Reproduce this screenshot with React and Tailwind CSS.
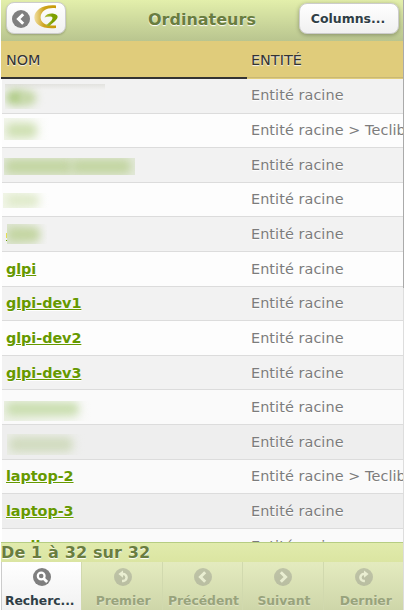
import React from "react";

const rows = [
  { blur: "bar-a" },
  { blur: "bar-b", entity: "Entité racine > Teclib" },
  { blur: "bar-c", low: true },
  { blur: "bar-d" },
  { blur: "bar-e", low: true },
  { name: "glpi", low: true },
  { name: "glpi-dev1" },
  { name: "glpi-dev2", low: true },
  { name: "glpi-dev3", low: true },
  { blur: "bar-f", low: true },
  { blur: "bar-g", low: true },
  { name: "laptop-2", entity: "Entité racine > Teclib" },
  { name: "laptop-3", low: true },
  { name: "mail", low: true },
];

// Tinted box, margins and smudges of every masked name.
const masks = {
  "bar-a": { box: "mt-[5px] ml-[3px] h-[25px] w-[100px] bg-linear-to-b from-[#e2e2df] via-[#f2f2f1] via-25% to-transparent", blobs: ["left-[1px] top-[6px] h-[15px] w-[19px] bg-[#b0cc87]", "left-[15px] top-[7px] h-[14px] w-[16px] bg-[#c2d6a2]"] },
  "bar-b": { box: "mt-[4px] ml-[2px] h-[22px] w-[46px] bg-linear-to-r from-[#f3f6ed] to-transparent", blobs: ["left-[2px] top-[5px] h-[15px] w-[31px] bg-[#cfe0b3]"] },
  "bar-c": { box: "mt-[10px] ml-[2px] h-[17px] w-[131px] bg-[#e3e9da]", blobs: ["left-[1px] top-[1px] h-[15px] w-[68px] bg-[#c3d5a2]", "left-[67px] top-[1px] h-[15px] w-[60px] bg-[#c3d5a2]"] },
  "bar-d": { box: "mt-[10px] ml-[1px] h-[15px] w-[46px] bg-linear-to-r from-[#f2f6e9] to-transparent", blobs: ["left-[3px] top-[1px] h-[13px] w-[33px] bg-[#dfeaca]"] },
  "bar-e": { box: "mt-[7px] ml-[5px] h-[20px] w-[40px] bg-linear-to-r from-[#dfe6d4] to-transparent", blobs: ["left-0 top-[3px] h-[15px] w-[33px] bg-[#c3d5a1]"], edge: true },
  "bar-f": { box: "mt-[11px] ml-[2px] h-[20px] w-[88px] bg-linear-to-r from-[#edf1e6] to-transparent", blobs: ["left-[2px] top-[1px] h-[14px] w-[73px] bg-[#cadeb0]"] },
  "bar-g": { box: "mt-[9px] ml-[5px] h-[21px] w-[80px] bg-linear-to-r from-[#ebede7] to-transparent", blobs: ["left-[2px] top-[3px] h-[15px] w-[64px] bg-[#d1dbbf]"] },
};

function Mask({ id }) {
  const m = masks[id];
  return (
    <div className="relative">
      <div className={`relative overflow-hidden ${m.box}`}>
        {m.blobs.map((b) => (
          <span key={b} className={`absolute rounded-md blur-[4px] ${b}`} />
        ))}
      </div>
      {m.edge && (
        <>
          <span className="absolute top-[9px] left-[4px] h-[5px] w-px bg-[#e3dd55]" />
          <span className="absolute top-[16px] left-[4px] h-px w-px bg-[#669900]" />
        </>
      )}
    </div>
  );
}

const glyphs = {
  left: <path d="M11.2 4.2 6.4 9l4.8 4.8" />,
  right: <path d="M6.8 4.2 11.6 9l-4.8 4.8" />,
  search: (
    <>
      <circle cx="8.2" cy="8" r="3.4" strokeWidth="2.2" />
      <path d="m10.6 10.4 3.6 3.6" strokeWidth="2.8" />
    </>
  ),
  back: (
    <>
      <path d="M7.5 6h1.6a3.5 3.5 0 0 1 0 7H8" strokeWidth="2.5" />
      <path d="M9 2.4v7.4L4.4 6.1Z" fill="white" stroke="none" />
    </>
  ),
  forward: (
    <>
      <path d="M10.5 6H8.9a3.5 3.5 0 0 0 0 7h1" strokeWidth="2.5" />
      <path d="M9 2.4v7.4l4.6-3.7Z" fill="white" stroke="none" />
    </>
  ),
};

function Disc({ kind, className = "" }) {
  return (
    <svg viewBox="0 0 18 18" className={`size-[18px] shrink-0 ${className}`}>
      <circle cx="9" cy="9" r="9" fill="#7f7f7f" />
      <g fill="none" stroke="white" strokeWidth="3">{glyphs[kind]}</g>
    </svg>
  );
}

function Logo() {
  return (
    <svg viewBox="0 0 24 24" className="mb-[2px] -ml-px h-6 w-6 shrink-0">
      <defs>
        <linearGradient id="gold" x1="0" x2="1">
          <stop offset="0" stopColor="#f1dfa2" />
          <stop offset=".45" stopColor="#cda31d" />
          <stop offset="1" stopColor="#c79a08" />
        </linearGradient>
        <linearGradient id="leaf" x1="0" x2="1">
          <stop offset="0" stopColor="#b9c24a" />
          <stop offset=".6" stopColor="#7da000" />
        </linearGradient>
      </defs>
      <path d="M22 .4V3.2C14.5 2 7 5.2 6.6 12c-.2 5.4 4.4 8.4 11.4 8.6h4v2.4C8.5 24.2.7 20 .3 12.8 0 5.2 9-1 22 .4Z" fill="url(#gold)" />
      <path d="M10.5 12.6c1.6-3.8 5.8-4.4 9.2-3.9 5 .8 4.9 4.2 1.4 7.2L15 21.2l-3.4-.4c3-2.5 6.7-5.2 6.9-7.7.1-2-4.8-2-8-.5Z" fill="url(#leaf)" />
    </svg>
  );
}

const nav = [
  { label: "Recherc...", icon: "search", active: true, nudge: "pr-[4px]" },
  { label: "Premier", icon: "back", nudge: "pl-[2px]" },
  { label: "Précédent", icon: "left", nudge: "pl-[2px]" },
  { label: "Suivant", icon: "right", nudge: "pl-[2px]" },
  { label: "Dernier", icon: "forward", nudge: "pl-[5px]" },
];

export default function App() {
  return (
    <div className="flex h-[610px] w-[404px] overflow-hidden bg-white pl-px font-['DejaVu_Sans',sans-serif]">
      <div className="flex w-[402px] shrink-0 flex-col overflow-hidden">
        <header className="flex h-[41px] shrink-0 items-start justify-between bg-linear-to-b from-[#e3efab] to-[#b9c58f] pt-[2px] pr-[4px] pl-[5px]">
          <div className="flex h-[32px] w-[60px] items-center gap-[5px] rounded-lg border border-[#ccc] bg-linear-to-b from-white to-[#f0f0f0] pl-[5px] shadow-[0_1px_2px_rgba(0,0,0,0.2)]">
            <Disc kind="left" className="mt-[2px]" />
            <Logo />
          </div>
          <h1 className="ml-[82px] flex-1 text-[16px] leading-[35px] font-bold text-[#697d40] [text-shadow:0_1px_1px_#fff]">Ordinateurs</h1>
          <button className="mt-px h-[31px] w-[100px] rounded-lg border border-[#ccc] bg-linear-to-b from-white to-[#f0f0f0] pt-[2px] pr-[2px] text-[12.5px] font-bold text-[#2f3e46] shadow-[0_1px_4px_rgba(0,0,0,0.3)] [text-shadow:0_1px_1px_#fff]">Columns...</button>
        </header>
        <div className="flex h-[38px] shrink-0 bg-[#e0cc7b] text-[14.4px] leading-[38px] text-[#333] [text-shadow:0_1px_1px_#f6f6f6]">
          <div className="w-[246px] border-b-2 border-[#333] pl-[5px]">NOM</div>
          <div className="mb-px h-[37px] flex-1 border-b border-[#c9b875] pl-[4px]">ENTITÉ</div>
        </div>
        <main className="min-h-0 flex-1 overflow-hidden pl-px">
          {rows.map((r, i) => (
            <div key={i} className={`flex h-[34.6px] border-b border-[#dcdcdc] text-[14.4px] ${r.low ? "leading-[35.8px]" : "leading-[33.8px]"} ${i % 2 ? (i > 8 ? "bg-[#fafafa]" : "bg-[#fdfdfd]") : i > 8 ? "bg-[#eeeeee]" : "bg-[#f2f2f2]"}`}>
              <div className="w-[245px] shrink-0">
                {r.blur ? <Mask id={r.blur} /> : <a className="ml-[4px] font-bold tracking-[-0.06px] text-[#669900] underline [text-shadow:0_1px_1px_#fff]">{r.name}</a>}
              </div>
              <div className="pl-[4px] tracking-[0.08px] whitespace-nowrap text-[#7c7c7c] [text-shadow:0_1px_1px_#fff]">{r.entity || "Entité racine"}</div>
            </div>
          ))}
        </main>
        <footer className="h-[68px] shrink-0 border-t border-[#b6cd82] bg-[#dee8a7]">
          <div className="h-[19px] bg-linear-to-b from-[#e1ebac] to-[#dbe5a2] text-[16px] leading-[19px] font-bold tracking-[0.13px] text-[#697d40] [text-shadow:0_1px_1px_#fff]">De 1 à 32 sur 32</div>
          <nav className="flex h-[48px]">
            {nav.map((n) => (
              <div key={n.label} className={`flex w-[80.4px] flex-col items-center border-l pt-[6px] text-[12.4px] font-bold ${n.active ? "border-[#ccc] bg-linear-to-b from-white to-[#f1f1f1] text-[#2f3e46]" : "border-[#d1d9ae] bg-linear-to-b from-[#e4ebbf] to-[#ced6a9] text-[#98a37c]"}`}>
                <Disc kind={n.icon} className={n.active ? "" : "ml-px opacity-35"} />
                <span className={`mt-[6px] leading-[17px] tracking-[-0.05px] whitespace-nowrap [text-shadow:0_1px_1px_rgba(255,255,255,0.4)] ${n.nudge}`}>{n.label}</span>
              </div>
            ))}
          </nav>
        </footer>
      </div>
      <div className="flex w-px shrink-0 flex-col bg-[#ddd]">
        <div className="h-[288px] bg-[#aaa]" />
      </div>
    </div>
  );
}
